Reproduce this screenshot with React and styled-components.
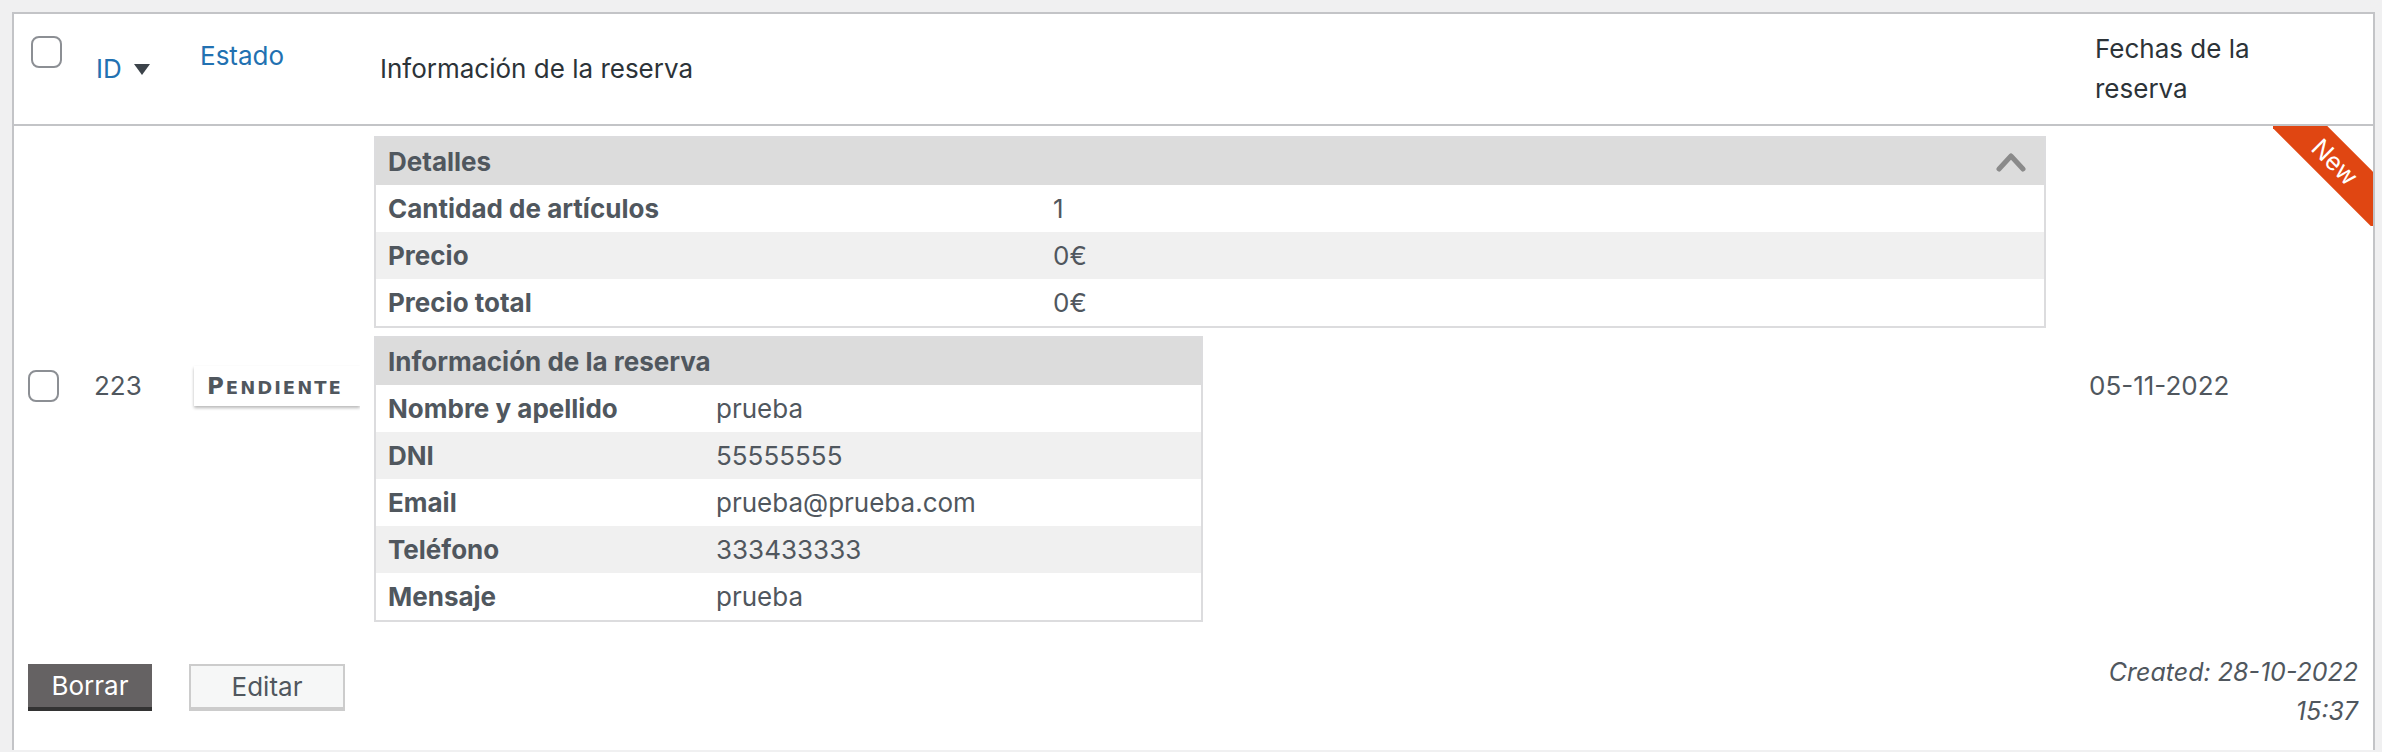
import React from "react";
import styled, { createGlobalStyle } from "styled-components";

const GlobalStyle = createGlobalStyle`
  html, body {
    margin: 0;
    padding: 0;
    background: #f0f0f1;
  }
  body {
    font-family: Inter, Roboto, "Noto Sans", sans-serif;
    color: #2c3338;
  }
`;

const columns = "70px 100px 180px 1fr 298px";

const details = [
  { label: "Cantidad de artículos", value: "1" },
  { label: "Precio", value: "0€" },
  { label: "Precio total", value: "0€" },
];

const booking = [
  { label: "Nombre y apellido", value: "prueba" },
  { label: "DNI", value: "55555555" },
  { label: "Email", value: "prueba@prueba.com" },
  { label: "Teléfono", value: "333433333" },
  { label: "Mensaje", value: "prueba" },
];

const Page = styled.div`
  padding: 12px 7px 0 12px;
`;

const ListTable = styled.div`
  background: #fff;
  border: 2px solid #c3c4c7;
  border-bottom: none;
  height: 738px;
  box-sizing: border-box;
  display: flex;
  flex-direction: column;
`;

const HeadRow = styled.div`
  display: grid;
  grid-template-columns: ${columns};
  height: 110px;
  border-bottom: 2px solid #c3c4c7;
  font-size: 26px;
  line-height: 40px;
`;

const HeadCell = styled.div`
  display: flex;
  align-items: ${(p) => (p.$top ? "flex-start" : "center")};
  padding-left: ${(p) => p.$pad || 0}px;
  padding-top: ${(p) => p.$padTop || 0}px;
  color: #2c3338;
`;

const SortLink = styled.a`
  color: #2271b1;
  text-decoration: none;
  display: flex;
  align-items: center;
  gap: 12px;
`;

const Checkbox = styled.span`
  display: block;
  width: 27px;
  height: 28px;
  border: 2px solid #8c8f94;
  border-radius: 8px;
  background: #fff;
`;

const BodyRow = styled.div`
  position: relative;
  display: grid;
  grid-template-columns: ${columns};
  align-items: center;
  font-size: 26px;
  line-height: 40px;
  color: #50575e;
`;

const BodyCell = styled.div`
  display: flex;
  align-items: center;
  padding-left: ${(p) => p.$pad || 0}px;
`;

const InfoCell = styled.div`
  padding: 10px 29px 23px 10px;
  display: flex;
  flex-direction: column;
  align-items: flex-start;
  gap: 8px;
`;

const Badge = styled.span`
  display: inline-block;
  width: 153px;
  height: 40px;
  padding-left: 13px;
  background: #fff;
  box-shadow: 0 2px 3px rgba(0, 0, 0, 0.28);
  clip-path: inset(-8px 0 -8px -8px);
  font-family: "DejaVu Sans", sans-serif;
  font-size: 18px;
  font-weight: 700;
  text-transform: uppercase;
  line-height: 40px;
  letter-spacing: 2px;
  color: #50575e;
  white-space: nowrap;

  &::first-letter {
    font-size: 23px;
  }
`;

const DataTable = styled.div`
  width: ${(p) => p.$width};
  border: 2px solid #dcdcde;
  box-sizing: border-box;
  font-size: 26px;
  color: #50575e;
`;

const DataHead = styled.div`
  display: flex;
  align-items: center;
  justify-content: space-between;
  height: 47px;
  padding: 0 18px 0 12px;
  background: #dcdcdc;
  font-weight: 700;
`;

const DataRow = styled.div`
  display: grid;
  grid-template-columns: ${(p) => p.$label}px 1fr;
  align-items: center;
  height: 47px;
  background: ${(p) => (p.$odd ? "#f0f0f0" : "#fff")};
`;

const Label = styled.span`
  padding-left: 12px;
  font-weight: 700;
`;

const Ribbon = styled.div`
  position: absolute;
  top: 0;
  right: 0;
  width: 100px;
  height: 100px;
  overflow: hidden;
  pointer-events: none;
`;

const RibbonBand = styled.div`
  position: absolute;
  left: -18px;
  top: 16px;
  width: 160px;
  height: 40px;
  background: #e04612;
  color: #fff;
  font-size: 25px;
  line-height: 40px;
  text-align: center;
  transform: rotate(45deg);
`;

const FooterRow = styled.div`
  flex: 1;
  display: flex;
  justify-content: space-between;
  align-items: flex-start;
  padding: 8px 15px 0 14px;
`;

const Actions = styled.div`
  display: flex;
  gap: 37px;
  margin-top: 11px;
`;

const Button = styled.button`
  height: 47px;
  box-sizing: border-box;
  font-family: inherit;
  font-size: 26px;
  padding: 0;
  cursor: pointer;
  width: ${(p) => p.$width}px;
  background: ${(p) => (p.$dark ? "#656263" : "#f6f7f7")};
  color: ${(p) => (p.$dark ? "#fff" : "#50575e")};
  border: ${(p) => (p.$dark ? "none" : "2px solid #cccccc")};
  border-bottom: 4px solid ${(p) => (p.$dark ? "#333333" : "#cccccc")};
`;

const Created = styled.div`
  text-align: right;
  font-style: italic;
  font-size: 25px;
  line-height: 39px;
  color: #50575e;
`;

const SortArrow = () => (
  <svg width="16" height="11" viewBox="0 0 16 11">
    <polygon points="0,0 16,0 8,11" fill="#3c434a" />
  </svg>
);

const Chevron = () => (
  <svg width="30" height="20" viewBox="0 0 30 20">
    <polyline
      points="3,17 15,4 27,17"
      fill="none"
      stroke="#8a8a8a"
      strokeWidth="5"
      strokeLinecap="round"
      strokeLinejoin="round"
    />
  </svg>
);

const App = () => {
  return (
    <Page>
      <GlobalStyle />
      <ListTable>
        <HeadRow>
          <HeadCell $top $pad={17} $padTop={22}>
            <Checkbox />
          </HeadCell>
          <HeadCell $pad={12}>
            <SortLink href="#">
              ID <SortArrow />
            </SortLink>
          </HeadCell>
          <HeadCell $top $pad={16} $padTop={22}>
            <SortLink href="#">Estado</SortLink>
          </HeadCell>
          <HeadCell $pad={16}>Información de la reserva</HeadCell>
          <HeadCell $pad={20}>
            Fechas de la
            <br />
            reserva
          </HeadCell>
        </HeadRow>

        <BodyRow>
          <BodyCell $pad={14}>
            <Checkbox />
          </BodyCell>
          <BodyCell $pad={10}>223</BodyCell>
          <BodyCell $pad={10}>
            <Badge>Pendiente</Badge>
          </BodyCell>
          <InfoCell>
            <DataTable $width="100%">
              <DataHead>
                Detalles
                <Chevron />
              </DataHead>
              {details.map((row, i) => (
                <DataRow key={row.label} $label={677} $odd={i % 2 === 1}>
                  <Label>{row.label}</Label>
                  <span>{row.value}</span>
                </DataRow>
              ))}
            </DataTable>
            <DataTable $width="829px">
              <DataHead>Información de la reserva</DataHead>
              {booking.map((row, i) => (
                <DataRow key={row.label} $label={340} $odd={i % 2 === 1}>
                  <Label>{row.label}</Label>
                  <span>{row.value}</span>
                </DataRow>
              ))}
            </DataTable>
          </InfoCell>
          <BodyCell $pad={14}>05-11-2022</BodyCell>
          <Ribbon>
            <RibbonBand>New</RibbonBand>
          </Ribbon>
        </BodyRow>

        <FooterRow>
          <Actions>
            <Button $dark $width={124}>
              Borrar
            </Button>
            <Button $width={156}>Editar</Button>
          </Actions>
          <Created>
            Created: 28-10-2022
            <br />
            15:37
          </Created>
        </FooterRow>
      </ListTable>
    </Page>
  );
};

export default App;
